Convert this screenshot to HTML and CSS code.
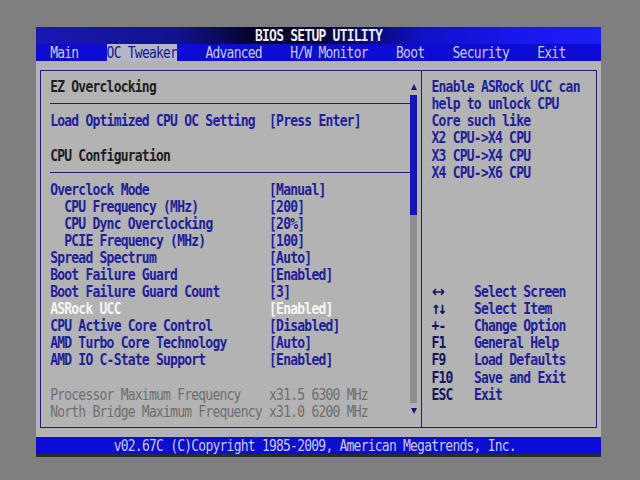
FILE: index.html
```html
<!DOCTYPE html>
<html lang="en">
<head>
<meta charset="utf-8">
<title>BIOS SETUP UTILITY</title>
<link rel="stylesheet" href="styles.css">
</head>
<body>
<div class="screen">
  <div class="title"><span class="tx">BIOS SETUP UTILITY</span></div>
  <nav class="menu">
    <span class="tab"><span class="tx">Main</span></span>
    <span class="tab active"><span class="tx">OC Tweaker</span></span>
    <span class="tab"><span class="tx">Advanced</span></span>
    <span class="tab"><span class="tx">H/W Monitor</span></span>
    <span class="tab"><span class="tx">Boot</span></span>
    <span class="tab"><span class="tx">Security</span></span>
    <span class="tab"><span class="tx">Exit</span></span>
  </nav>
  <div class="body">
    <div class="box">
      <div class="left">
        <div class="list">
          <div class="row head">EZ Overclocking</div>
          <div class="sep"></div>
          <div class="row item"><span>Load Optimized CPU OC Setting</span><span>[Press Enter]</span></div>
          <div class="row"></div>
          <div class="row head">CPU Configuration</div>
          <div class="sep"></div>
          <div class="row item"><span>Overclock Mode</span><span>[Manual]</span></div>
          <div class="row item sub"><span>CPU Frequency (MHz)</span><span>[200]</span></div>
          <div class="row item sub"><span>CPU Dync Overclocking</span><span>[20%]</span></div>
          <div class="row item sub"><span>PCIE Frequency (MHz)</span><span>[100]</span></div>
          <div class="row item"><span>Spread Spectrum</span><span>[Auto]</span></div>
          <div class="row item"><span>Boot Failure Guard</span><span>[Enabled]</span></div>
          <div class="row item"><span>Boot Failure Guard Count</span><span>[3]</span></div>
          <div class="row item selected"><span>ASRock UCC</span><span>[Enabled]</span></div>
          <div class="row item"><span>CPU Active Core Control</span><span>[Disabled]</span></div>
          <div class="row item"><span>AMD Turbo Core Technology</span><span>[Auto]</span></div>
          <div class="row item"><span>AMD IO C-State Support</span><span>[Enabled]</span></div>
          <div class="row"></div>
          <div class="row item info"><span>Processor Maximum Frequency</span><span>x31.5 6300 MHz</span></div>
          <div class="row item info"><span>North Bridge Maximum Frequency</span><span>x31.0 6200 MHz</span></div>
        </div>
        <div class="scroll">
          <div class="arrow up"></div>
          <div class="thumb"></div>
          <div class="track"></div>
          <div class="arrow down"></div>
        </div>
      </div>
      <div class="right">
        <div class="help">
          <div class="row">Enable ASRock UCC can</div>
          <div class="row">help to unlock CPU</div>
          <div class="row">Core such like</div>
          <div class="row">X2 CPU-&gt;X4 CPU</div>
          <div class="row">X3 CPU-&gt;X4 CPU</div>
          <div class="row">X4 CPU-&gt;X6 CPU</div>
        </div>
        <div class="keys">
          <div class="key"><span class="k"><svg class="lr" width="13" height="7" viewBox="0 0 13 7"><path d="M1 3.5H12M1 3.5L4 1M1 3.5L4 6M12 3.5L9 1M12 3.5L9 6" fill="none" stroke="currentColor" stroke-width="1.4"/></svg></span><span>Select Screen</span></div>
          <div class="key"><span class="k"><span class="ud">↑↓</span></span><span>Select Item</span></div>
          <div class="key"><span class="k">+-</span><span>Change Option</span></div>
          <div class="key"><span class="k">F1</span><span>General Help</span></div>
          <div class="key"><span class="k">F9</span><span>Load Defaults</span></div>
          <div class="key"><span class="k">F10</span><span>Save and Exit</span></div>
          <div class="key"><span class="k">ESC</span><span>Exit</span></div>
        </div>
      </div>
    </div>
  </div>
  <div class="footer"><span class="tx">v02.67C (C)Copyright 1985-2009, American Megatrends, Inc.</span></div>
</div>
</body>
</html>
```
FILE: styles.css
```css
:root {
  --cw: 7.0625px;
  --rh: 17.08px;
  --line: #1c1c7e;
  --blue-text: #20209a;
  --tall: translateY(0.5px) scaleY(1.16);
}
* { box-sizing: border-box; margin: 0; padding: 0; }
html, body { width: 640px; height: 480px; overflow: hidden; }
body {
  background: #7f7f7f;
  font-family: "DejaVu Sans Mono", "Liberation Mono", monospace;
  font-size: 13px;
  font-weight: bold;
  letter-spacing: -0.77px;
  line-height: var(--rh);
  white-space: nowrap;
}
.tx { display: inline-block; transform: var(--tall); }
.screen {
  margin: 27px 0 0 36px;
  width: calc(80 * var(--cw));
  border-bottom: 3px solid #2a2a2a;
}
.title {
  height: var(--rh);
  text-align: center;
  color: #ececec;
  background: linear-gradient(90deg, #1818b4 0%, #12128e 25%, #02021e 40%, #05054c 55%, #1010c6 68%, #1818ec 85%, #1c1cf6 100%);
}
.menu {
  display: flex;
  gap: calc(4 * var(--cw));
  padding-left: calc(2 * var(--cw));
  height: var(--rh);
  background: #0c0cd4;
  color: #c8c8ee;
  font-weight: normal;
}
.tab.active { background: #b6b6c8; color: #16168e; }
.body {
  background: #b3b3b3;
  height: calc(22 * var(--rh));
  padding: calc(var(--rh) / 2) calc(var(--cw) / 2);
}
.box {
  height: 100%;
  border: 1px solid var(--line);
  display: grid;
  grid-template-columns: calc(54 * var(--cw) - 1px) 1fr;
}
.left {
  display: grid;
  grid-template-columns: 1fr var(--cw);
  padding: calc(var(--rh) / 2 - 1px) calc(var(--cw) / 2) calc(var(--rh) / 2 - 1px) calc(1.5 * var(--cw) - 1px);
}
.row { height: var(--rh); transform: var(--tall); }
.head { color: #1e1e1e; }
.sep {
  height: var(--rh);
  background: linear-gradient(var(--line), var(--line)) center / 100% 1px no-repeat;
}
.item {
  display: grid;
  grid-template-columns: calc(31 * var(--cw)) 1fr;
  color: var(--blue-text);
}
.item.sub span:first-child { padding-left: calc(2 * var(--cw)); }
.item.selected { color: #f6f6f6; }
.item.info { color: #6e6e6e; font-weight: normal; }
.scroll {
  display: grid;
  grid-template-rows: var(--rh) calc(7 * var(--rh)) calc(11 * var(--rh)) var(--rh);
}
.thumb { background: #1616b4; }
.track { background: #8e8e8e; }
.arrow { display: flex; justify-content: center; align-items: center; }
.arrow::before {
  content: "";
  border-left: 3px solid transparent;
  border-right: 3px solid transparent;
}
.arrow.up::before { border-bottom: 6px solid #18187c; }
.arrow.down::before { border-top: 6px solid #18187c; }
.right {
  border-left: 1px solid var(--line);
  padding: calc(var(--rh) / 2 - 1px) 0 0 calc(1.5 * var(--cw) - 1px);
  color: var(--blue-text);
}
.keys { margin-top: calc(6 * var(--rh)); }
.key {
  height: var(--rh);
  display: grid;
  grid-template-columns: calc(6 * var(--cw)) 1fr;
  transform: var(--tall);
}
.k { color: #14145e; display: flex; align-items: center; }
.ud { font-size: 15px; letter-spacing: -2.5px; }
.lr { display: block; }
.footer {
  height: var(--rh);
  background: #0c0cd6;
  color: #c8c8f0;
  font-weight: normal;
  padding-left: calc(11 * var(--cw));
}
```
